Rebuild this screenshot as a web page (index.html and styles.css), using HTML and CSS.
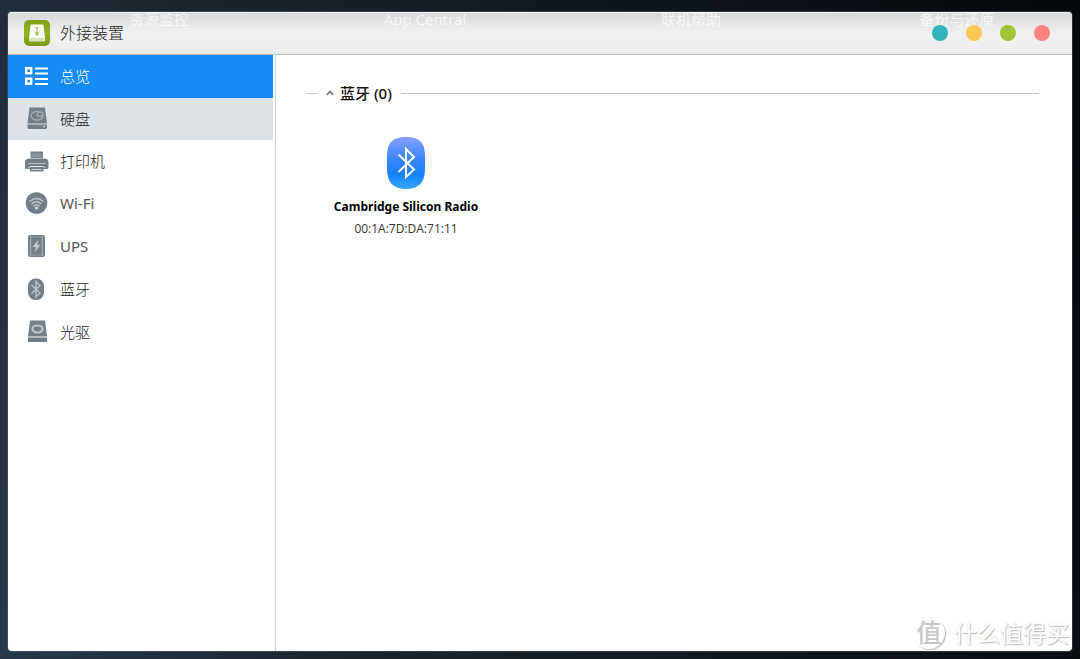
FILE: index.html
```html
<!DOCTYPE html>
<html lang="zh-CN">
<head>
<meta charset="utf-8">
<meta name="viewport" content="width=device-width, initial-scale=1">
<title>外接装置</title>
<link rel="stylesheet" href="styles.css">
</head>
<body>
<main class="window">
  <header class="titlebar">
    <div class="desktop-labels" aria-hidden="true">
      <span>资源监控</span><span>App Central</span><span>联机帮助</span><span>备份与还原</span>
    </div>
    <svg class="app-icon" viewBox="0 0 26 26">
      <defs><linearGradient id="app" x1="0" y1="0" x2="0" y2="1"><stop offset="0" stop-color="#80a01b"/><stop offset=".5" stop-color="#91b320"/><stop offset="1" stop-color="#7c9a18"/></linearGradient></defs>
      <rect width="26" height="26" rx="5" fill="url(#app)"/>
      <path d="M6.700 4.500H19.300L21 18H5Z" fill="#fff"/>
      <path d="M5 18H21V20.500Q21 21.500 20 21.500H6Q5 21.500 5 20.500Z" fill="#dce6b5"/>
      <path d="M13 7.500V13" stroke="#a9c262" stroke-width="1.200"/>
      <circle cx="13" cy="8" r="1.200" fill="#a9c262"/>
      <path d="M10.500 11.500L13 14L15.500 11.500" fill="none" stroke="#a9c262"/>
      <circle cx="13" cy="14" r="1.700" fill="#a9c262"/>
    </svg>
    <h1 class="title">外接装置</h1>
    <div class="controls">
      <button class="dot teal" type="button" aria-label="帮助"></button>
      <button class="dot yellow" type="button" aria-label="最小化"></button>
      <button class="dot green" type="button" aria-label="最大化"></button>
      <button class="dot red" type="button" aria-label="关闭"></button>
    </div>
  </header>
  <div class="body">
    <nav class="sidebar">
      <button class="item active" type="button">
        <svg class="icon" viewBox="0 0 26 26"><g fill="none" stroke="#fff" stroke-width="2.400"><rect x="3.200" y="5.200" width="5" height="5"/><rect x="3.200" y="15.700" width="5" height="5"/><path d="M12 5.500H25M12 10.500H25M12 16H25M12 21H25" stroke-width="2"/></g></svg>
        <span>总览</span>
      </button>
      <button class="item hover" type="button">
        <svg class="icon" viewBox="0 0 26 26"><path d="M6.500 2.500H22L24 18.500H4.500Z" fill="#747e89"/><path d="M4.500 19.500H24V22.500Q24 24 22.500 24H6Q4.500 24 4.500 22.500Z" fill="#747e89"/><path d="M20 10.500A6 4.300 0 1 1 16.500 6.800M14.500 11H20V8.500A3 2.500 0 0 0 14.500 11" fill="none" stroke="#a5adb6" stroke-width="1.300"/><path d="M20.500 21.500H22" stroke="#dfe4e8" stroke-width="1.500"/></svg>
        <span>硬盘</span>
      </button>
      <button class="item" type="button">
        <svg class="icon" viewBox="0 0 26 26"><path d="M7.500 3.500H20V10H7.500Z" fill="#747e89"/><path d="M8.500 5H19V9.500H8.500Z" fill="#8a939c"/><path d="M5.500 10.500H22Q25.500 11 25.500 14.500V20Q25.500 21 24 21H3.500Q2 21 2 20V14.500Q2 11 5.500 10.500Z" fill="#747e89"/><path d="M5 15.500H22.500" stroke="#b9bfc5"/><path d="M5.500 20L7 18.500H20.500L22 20" fill="none" stroke="#e5e8ea"/><path d="M7 20H20.500V23.500H7Z" fill="#747e89"/><path d="M8.500 21.500H19" stroke="#d0d4d8"/></svg>
        <span>打印机</span>
      </button>
      <button class="item latin" type="button">
        <svg class="icon" viewBox="0 0 26 26"><circle cx="13.500" cy="13" r="10.800" fill="#747e89"/><g fill="none" stroke="#bcc2c8" stroke-width="1.600"><path d="M6.500 11.500Q13.500 5.500 20.500 11.500M8.500 14Q13.500 9.500 18.500 14M10.500 16.300Q13.500 13.700 16.500 16.300"/></g><circle cx="13.500" cy="18" r="1.500" fill="#d8dce0"/></svg>
        <span>Wi-Fi</span>
      </button>
      <button class="item latin" type="button">
        <svg class="icon" viewBox="0 0 26 26"><rect x="5" y="2" width="17" height="22" rx="2" fill="#747e89"/><path d="M7.700 3V23M19.300 3V23" stroke="#b3b9c0"/><path d="M8 4H19M8 22H19" stroke="#929aa3"/><path d="M15.500 6.500L9.500 14H13L11.500 19.500L17.500 11.800H14Z" fill="#c5cace"/></svg>
        <span>UPS</span>
      </button>
      <button class="item" type="button">
        <svg class="icon" viewBox="0 0 26 26"><rect x="5" y="2.500" width="16" height="21.500" rx="7.500" fill="#747e89"/><path d="M8.500 9L17 17L13 21V5.500L17 9.500L8.500 17.500" fill="none" stroke="#b9bfc5" stroke-width="1.500"/></svg>
        <span>蓝牙</span>
      </button>
      <button class="item" type="button">
        <svg class="icon" viewBox="0 0 26 26"><path d="M7 2.500H22L24 18.500H5Z" fill="#747e89"/><path d="M5 19.500H24V24H5Z" fill="#747e89"/><path d="M6 19H23" stroke="#b4bac1"/><ellipse cx="14.500" cy="11" rx="5" ry="3.500" fill="none" stroke="#bec4ca" stroke-width="2.200"/></svg>
        <span>光驱</span>
      </button>
    </nav>
    <section class="content">
      <div class="group">
        <button class="group-toggle" type="button" aria-expanded="true">
          <svg class="chevron" viewBox="0 0 8 6"><path d="M.8 5L4 1.500L7.200 5" fill="none" stroke="#777" stroke-width="1.800"/></svg>
          <span>蓝牙 (0)</span>
        </button>
      </div>
      <article class="device">
        <svg class="device-icon" viewBox="0 0 40 52">
          <defs><linearGradient id="bt" x1="0" y1="0" x2="0" y2="1"><stop offset="0" stop-color="#899fff"/><stop offset=".4" stop-color="#3d87ff"/><stop offset=".72" stop-color="#1680ff"/><stop offset="1" stop-color="#35a7ff"/></linearGradient></defs>
          <path d="M20 0C35 0 39 7 39 20V32C39 45 33 52 20 52S1 45 1 32V20C1 7 5 0 20 0Z" fill="url(#bt)"/>
          <path d="M12.500 17.500L28 32.500L20 40V12L28 20L12.500 35" fill="none" stroke="#fff" stroke-width="2"/>
        </svg>
        <h2 class="device-name">Cambridge Silicon Radio</h2>
        <p class="device-address">00:1A:7D:DA:71:11</p>
      </article>
    </section>
  </div>
</main>
<div class="watermark"><span class="seal">值</span><span>什么值得买</span></div>
</body>
</html>
```
FILE: styles.css
```css
* { box-sizing: border-box; }
body {
  margin: 0;
  min-height: 100vh;
  padding: 12px 8px 8px;
  display: flex;
  background: linear-gradient(75deg, #26384a 0%, #1b2630 25%, #10171e 60%, #05080c 100%);
  color: #444;
  font-family: "Open Sans", "Noto Sans CJK SC", sans-serif;
  font-size: 15px;
}
button { border: 0; padding: 0; margin: 0; background: none; color: inherit; font: inherit; cursor: pointer; }
.window {
  flex: 1;
  display: flex;
  flex-direction: column;
  overflow: hidden;
  background: #fff;
  border-radius: 4px;
  box-shadow: 0 0 1px 1px rgba(110, 120, 130, .4);
}
.titlebar {
  position: relative;
  display: flex;
  align-items: center;
  gap: 10px;
  height: 43px;
  padding: 0 22px 2px 16px;
  background: linear-gradient(#d8d9da, #f1f1f1 52%, #ebebeb);
  border-top: 1px solid #f6f6f6;
  border-bottom: 1px solid #bdbdbd;
}
.app-icon { width: 26px; height: 26px; }
.title { margin: 0; font-size: 16px; font-weight: 300; line-height: 24px; color: #222; }
.desktop-labels {
  position: absolute;
  top: 0;
  left: 18px;
  right: -18px;
  display: grid;
  grid-template-columns: repeat(4, 1fr);
  text-align: center;
  font-size: 15px;
  line-height: 12px;
  color: rgba(255, 255, 255, .7);
}
.controls { display: flex; gap: 18px; margin-left: auto; position: relative; }
.dot { width: 16px; height: 16px; border-radius: 50%; }
.teal { background: #30b3b9; }
.yellow { background: #fbc953; }
.green { background: #a3c43a; }
.red { background: #ff8583; }
.body { flex: 1; display: flex; }
.sidebar {
  flex: 0 0 267px;
  display: grid;
  grid-template-rows: repeat(7, 1fr);
  height: 298px;
  padding-right: 2px;
}
.item {
  display: flex;
  align-items: center;
  gap: 11px;
  padding: 0 0 1px 15px;
  text-align: left;
  font-weight: 300;
  color: #222;
}
.latin { font-family: "Noto Sans", sans-serif; font-weight: 400; color: #555; }
.active { background: #148bf2; color: #fff; }
.hover { background: #dee3e7; }
.icon { width: 26px; height: 26px; }
.content { flex: 1; padding: 25px 33px 26px 31px; border-left: 1px solid #d0d0d0; }
.group { display: flex; align-items: center; gap: 9px; }
.group::before, .group::after { content: ""; height: 1px; background: #c4c4cb; }
.group::before { width: 10px; }
.group::after { flex: 1; }
.group-toggle { display: flex; align-items: center; gap: 6px; color: #111; font-family: "Noto Sans", "Noto Sans CJK SC", sans-serif; line-height: 26px; font-weight: 500; }
.chevron { width: 8px; height: 6px; }
.device { width: 198px; margin-top: 31px; display: flex; flex-direction: column; align-items: center; }
.device-icon { width: 40px; height: 52px; }
.device-name { margin: 7px 0 0; font-family: "Noto Sans", sans-serif; font-size: 12px; line-height: 22px; font-weight: 700; color: #000; }
.device-address { margin: 0; font-size: 12px; line-height: 22px; color: #333; }
.watermark {
  position: absolute;
  right: 11px;
  bottom: 10px;
  display: flex;
  align-items: center;
  gap: 9px;
  color: #fff;
  font-size: 23px;
  line-height: 32px;
  text-shadow: 1px 1px 1px #bbb, 0 0 1px #ccc;
}
.seal {
  width: 32px;
  height: 32px;
  line-height: 30px;
  text-align: center;
  font-size: 25px;
  font-weight: 500;
  color: #c8c8c8;
  border-radius: 50%;
  box-shadow: 1px 1px 1px #bbb;
  text-shadow: none;
}
```
